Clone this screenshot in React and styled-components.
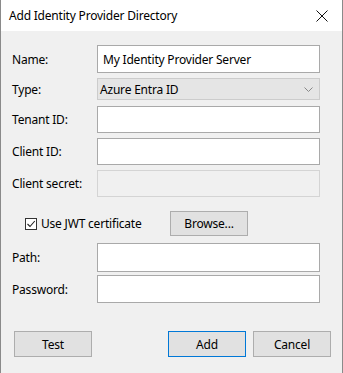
import React, { useState } from 'react';
import styled, { createGlobalStyle } from 'styled-components';

const GlobalStyle = createGlobalStyle`
  html, body {
    margin: 0;
    padding: 0;
    background: #ffffff;
  }
  body {
    font-family: "Noto Sans", "Open Sans", sans-serif;
    font-size: 12px;
    letter-spacing: -0.2px;
    color: #000;
  }
`;

const Window = styled.div`
  width: 343px;
  height: 373px;
  box-sizing: border-box;
  border-left: 1px solid #8a8a8a;
  border-right: 1px solid #8a8a8a;
  display: flex;
  flex-direction: column;
  background: #f0f0f0;
  overflow: hidden;
`;

const TitleBar = styled.div`
  height: 31px;
  background: #ffffff;
  display: flex;
  align-items: center;
  justify-content: space-between;
  padding: 0 12px 0 8px;
  flex-shrink: 0;
`;

const Title = styled.span`
  font-size: 12px;
  color: #000;
`;

const CloseButton = styled.button`
  width: 16px;
  height: 16px;
  padding: 0;
  border: none;
  background: transparent;
  display: flex;
  align-items: center;
  justify-content: center;
`;

const Body = styled.div`
  flex: 1;
  display: flex;
  flex-direction: column;
  padding: 14px 22px 0 11px;
`;

const Fields = styled.div`
  display: flex;
  flex-direction: column;
`;

const Row = styled.div`
  display: grid;
  grid-template-columns: 85px 1fr;
  align-items: center;
  margin-top: ${({ $top }) => $top || 0}px;
`;

const Label = styled.label`
  color: #000;
  font-size: 12px;
`;

const TextBox = styled.input`
  box-sizing: border-box;
  height: ${({ $h }) => $h || 28}px;
  width: 100%;
  border: 1px solid ${({ disabled }) => (disabled ? '#d4d4d4' : '#a9a9a9')};
  background: ${({ disabled }) => (disabled ? '#f0f0f0' : '#ffffff')};
  font-family: inherit;
  font-size: 12px;
  letter-spacing: inherit;
  padding: 0 5px;
  outline: none;
  color: #000;
`;

const Combo = styled.div`
  box-sizing: border-box;
  height: 22px;
  border: 1px solid #cccccc;
  background: #e5e5e5;
  display: flex;
  align-items: center;
  justify-content: space-between;
  padding: 0 6px 0 2px;
`;

const CheckRow = styled.div`
  display: flex;
  align-items: center;
  margin-top: 14px;
  padding-left: 13px;
`;

const CheckLabel = styled.label`
  display: flex;
  align-items: center;
  gap: 4px;
  width: 145px;
`;

const CheckBox = styled.span`
  box-sizing: border-box;
  width: 12px;
  height: 12px;
  border: 1px solid #333;
  background: #fff;
  display: flex;
  align-items: center;
  justify-content: center;
`;

const Button = styled.button`
  box-sizing: border-box;
  width: 78px;
  height: ${({ $h }) => $h || 26}px;
  background: #e1e1e1;
  border: 1px solid ${({ $primary }) => ($primary ? '#0078d7' : '#adadad')};
  font-family: inherit;
  font-size: 12px;
  letter-spacing: inherit;
  color: #000;
  padding: 0;
`;

const Footer = styled.div`
  display: flex;
  align-items: center;
  margin-top: 28px;
  padding-left: 2px;
  margin-right: -11px;
`;

const Spacer = styled.div`
  flex: 1;
`;

const RightButtons = styled.div`
  display: flex;
  gap: 7px;
`;

const App = () => {
  const [name, setName] = useState('My Identity Provider Server');
  const [useJwt, setUseJwt] = useState(true);

  return (
    <>
      <GlobalStyle />
      <Window>
        <TitleBar>
          <Title>Add Identity Provider Directory</Title>
          <CloseButton aria-label="Close">
            <svg width="12" height="12" viewBox="0 0 12 12">
              <path d="M0.5 0.5 L11.5 11.5 M11.5 0.5 L0.5 11.5" stroke="#111" strokeWidth="1" />
            </svg>
          </CloseButton>
        </TitleBar>
        <Body>
          <Fields>
            <Row>
              <Label>Name:</Label>
              <TextBox value={name} onChange={(e) => setName(e.target.value)} />
            </Row>
            <Row $top={5}>
              <Label>Type:</Label>
              <Combo>
                <span>Azure Entra ID</span>
                <svg width="9" height="5" viewBox="0 0 9 5">
                  <path d="M0.5 0.5 L4.5 4.5 L8.5 0.5" fill="none" stroke="#888" strokeWidth="1" />
                </svg>
              </Combo>
            </Row>
            <Row $top={6}>
              <Label>Tenant ID:</Label>
              <TextBox $h={27} />
            </Row>
            <Row $top={5}>
              <Label>Client ID:</Label>
              <TextBox $h={27} />
            </Row>
            <Row $top={5}>
              <Label>Client secret:</Label>
              <TextBox $h={27} disabled />
            </Row>
          </Fields>

          <CheckRow>
            <CheckLabel onClick={() => setUseJwt(!useJwt)}>
              <CheckBox>
                {useJwt && (
                  <svg width="10" height="10" viewBox="0 0 10 10">
                    <path d="M1.5 5 L4 7.5 L8.8 2" fill="none" stroke="#222" strokeWidth="1.1" />
                  </svg>
                )}
              </CheckBox>
              Use JWT certificate
            </CheckLabel>
            <Button $h={25}>Browse...</Button>
          </CheckRow>

          <Fields>
            <Row $top={7}>
              <Label>Path:</Label>
              <TextBox $h={29} />
            </Row>
            <Row $top={3}>
              <Label>Password:</Label>
              <TextBox type="password" />
            </Row>
          </Fields>

          <Footer>
            <Button>Test</Button>
            <Spacer />
            <RightButtons>
              <Button $primary>Add</Button>
              <Button>Cancel</Button>
            </RightButtons>
          </Footer>
        </Body>
      </Window>
    </>
  );
};

export default App;
